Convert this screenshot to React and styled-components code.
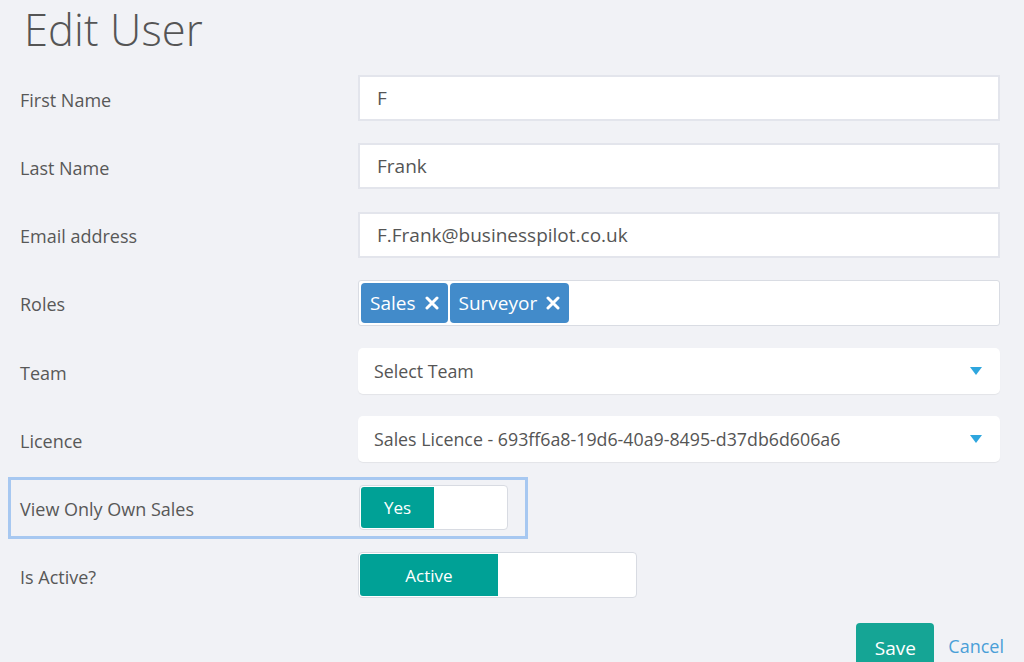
import React from "react";
import styled, { createGlobalStyle } from "styled-components";

const Global = createGlobalStyle`
  html, body { margin: 0; padding: 0; background: #f1f2f6; }
  body { font-family: "Open Sans", "Noto Sans", sans-serif; color: #555; }
  * { box-sizing: border-box; }
`;

const Page = styled.div`
  padding: 0 16px 0 20px;
  width: 1024px;
  height: 662px;
  overflow: hidden;
`;

const Title = styled.h1`
  margin: 0;
  padding: 4px 0 0 4px;
  font-size: 43.5px;
  font-weight: 300;
  line-height: 52px;
  color: #555;
  letter-spacing: 0.1px;
`;

const Form = styled.div`
  display: flex;
  flex-direction: column;
  gap: 22.3px;
  margin-top: 19px;
  width: 980px;
`;

const Row = styled.div`
  display: grid;
  grid-template-columns: 338px 642px;
  align-items: center;
  min-height: 46px;
`;

const HighlightRow = styled.div`
  position: relative;
  display: flex;
  align-items: center;
  width: 488px;
  height: 45px;
  &::before {
    content: "";
    position: absolute;
    left: -12px;
    right: -20px;
    top: -8px;
    bottom: -9px;
    border: 3px solid #a7c8f1;
    pointer-events: none;
  }
`;

const Label = styled.label`
  font-size: 18px;
  color: #585858;
  padding-top: 3px;
  width: ${(p) => (p.$w ? p.$w : "auto")};
  flex-shrink: 0;
`;

const Input = styled.div`
  height: 46px;
  background: #fff;
  border: 2px solid #e3e5ec;
  padding: 0 17px;
  display: flex;
  align-items: center;
  font-size: 19px;
  color: #555;
`;

const TagBox = styled.div`
  height: 46px;
  background: #fff;
  border: 1px solid #d9dce3;
  border-radius: 3px;
  padding: 2px;
  display: flex;
  align-items: stretch;
  gap: 2px;
`;

const Tag = styled.span`
  background: #428bca;
  color: #fff;
  border-radius: 4px;
  display: flex;
  align-items: center;
  gap: 9px;
  padding: 0 9px 0 9px;
  font-size: 19px;
`;

const Select = styled.div`
  height: 46px;
  background: #fff;
  border-radius: 5px;
  box-shadow: 0 1px 1px rgba(0, 0, 0, 0.06);
  padding: 0 16px;
  display: flex;
  align-items: center;
  justify-content: space-between;
  font-size: 17.8px;
  color: #555;
`;

const Caret = styled.span`
  width: 0;
  height: 0;
  border-left: 6px solid transparent;
  border-right: 6px solid transparent;
  border-top: 8px solid #2ea6de;
  margin-right: 2px;
`;

const Toggle = styled.div`
  width: ${(p) => p.$w}px;
  height: ${(p) => p.$h}px;
  background: #fff;
  border: 1px solid #d8dbe2;
  border-radius: 4px;
  padding: 1px;
  display: flex;
`;

const ToggleOn = styled.div`
  width: ${(p) => p.$w}px;
  background: #00a196;
  color: #fff;
  border-radius: 3px 0 0 3px;
  display: flex;
  align-items: center;
  justify-content: center;
  font-size: 17px;
  font-weight: 500;
`;

const Actions = styled.div`
  display: flex;
  justify-content: flex-end;
  align-items: center;
  gap: 14px;
  margin-top: 21px;
`;

const SaveButton = styled.button`
  background: #15a595;
  color: #fff;
  border: none;
  border-radius: 4px;
  width: 78px;
  height: 50px;
  font-family: inherit;
  font-size: 19px;
  padding: 0;
  margin-top: 4px;
  align-self: flex-start;
`;

const CancelLink = styled.a`
  color: #4a9fd8;
  font-size: 18px;
  text-decoration: none;
  margin-right: 4px;
`;

const XIcon = () => (
  <svg width="14" height="14" viewBox="0 0 14 14">
    <path d="M2 2 L12 12 M12 2 L2 12" stroke="#fff" strokeWidth="3" strokeLinecap="round" />
  </svg>
);

export default function App() {
  return (
    <Page>
      <Global />
      <Title>Edit User</Title>
      <Form>
        <Row>
          <Label>First Name</Label>
          <Input>F</Input>
        </Row>
        <Row>
          <Label>Last Name</Label>
          <Input>Frank</Input>
        </Row>
        <Row>
          <Label>Email address</Label>
          <Input>F.Frank@businesspilot.co.uk</Input>
        </Row>
        <Row>
          <Label>Roles</Label>
          <TagBox>
            <Tag>Sales <XIcon /></Tag>
            <Tag>Surveyor <XIcon /></Tag>
          </TagBox>
        </Row>
        <Row>
          <Label>Team</Label>
          <Select>
            Select Team <Caret />
          </Select>
        </Row>
        <Row>
          <Label>Licence</Label>
          <Select>
            Sales Licence - 693ff6a8-19d6-40a9-8495-d37db6d606a6 <Caret />
          </Select>
        </Row>
        <HighlightRow>
          <Label $w="339px">View Only Own Sales</Label>
          <Toggle $w={150} $h={45}>
            <ToggleOn $w={73}>Yes</ToggleOn>
          </Toggle>
        </HighlightRow>
        <Row>
          <Label>Is Active?</Label>
          <Toggle $w={279} $h={46}>
            <ToggleOn $w={138}>Active</ToggleOn>
          </Toggle>
        </Row>
      </Form>
      <Actions>
        <SaveButton>Save</SaveButton>
        <CancelLink href="#">Cancel</CancelLink>
      </Actions>
    </Page>
  );
}
